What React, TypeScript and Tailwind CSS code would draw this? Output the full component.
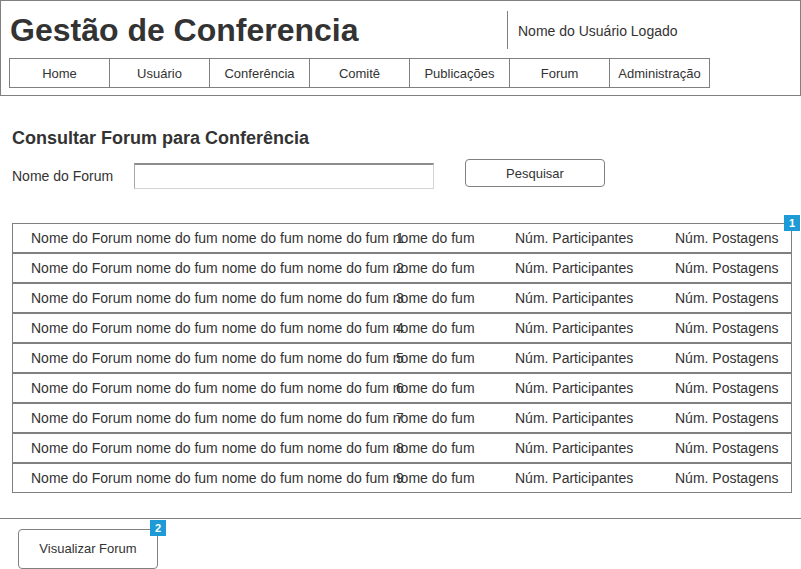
import React from "react";

const navItems = ["Home", "Usuário", "Conferência", "Comitê", "Publicações", "Forum", "Administração"];
const rows = [1, 2, 3, 4, 5, 6, 7, 8, 9];

function Badge({ n }: { n: number }) {
  return (
    <div className="flex h-[16px] w-[16px] items-center justify-center bg-[#1e9ad6] text-[11px] font-bold leading-none text-white">
      {n}
    </div>
  );
}

export default function App() {
  return (
    <div
      className="relative h-[569px] w-[801px] overflow-hidden bg-white text-[#333333]"
      style={{ fontFamily: '"Liberation Sans", Arial, sans-serif' }}
    >
      {/* Header */}
      <div className="h-[96px] border border-[#808080] px-[8px] pt-[10px]">
        <div className="grid h-[38px] grid-cols-[498px_1fr]">
          <div className="pl-[1px] pt-[1px] text-[32px] font-bold leading-[37px] text-[#333333]">Gestão de Conferencia</div>
          <div className="flex items-center border-l border-[#808080] pl-[10px] pt-[2px] text-[14px]">Nome do Usuário Logado</div>
        </div>
        <div className="mt-[9px] flex h-[30px] w-[701px] border-y border-l border-[#808080]">
          {navItems.map((t) => (
            <div key={t} className="flex w-[100px] items-center justify-center border-r border-[#808080] pt-[1px] text-[13px]">
              {t}
            </div>
          ))}
        </div>
      </div>

      {/* Search section */}
      <div className="mt-[30px] pl-[12px] text-[18px] font-bold leading-[24px]">Consultar Forum para Conferência</div>
      <div className="mt-[9px] flex items-start pl-[12px]">
        <div className="mt-[7px] w-[122px] text-[14px] leading-[20px]">Nome do Forum</div>
        <div className="mt-[4px] h-[26px] w-[300px] border border-[#d4d4d4] border-l-[#a8a8a8] border-t-2 border-t-[#8c8c8c] bg-white"></div>
        <button className="ml-[31px] flex h-[28px] w-[140px] items-center justify-center rounded-[4px] border border-[#808080] bg-white pt-[1px] text-[13px] text-[#333333]">
          Pesquisar
        </button>
      </div>

      {/* Table */}
      <div className="relative ml-[12px] mt-[34px] w-[780px] border border-[#808080]">
        {rows.map((n, i) => (
          <div
            key={n}
            className={`relative flex items-center whitespace-nowrap text-[14px] ${i === 0 ? "h-[28px]" : "h-[30px] border-t-2 border-[#808080]"}`}
          >
            <div className="w-[502px] pl-[18px]">Nome do Forum nome do fum nome do fum nome do fum nome do fum</div>
            <div className="w-[160px]">Núm. Participantes</div>
            <div>Núm. Postagens</div>
            <div className="absolute left-[383px] top-0 flex h-full items-center">{n}</div>
          </div>
        ))}
        <div className="absolute right-[-9px] top-[-9px]">
          <Badge n={1} />
        </div>
      </div>

      {/* Footer */}
      <div className="mt-[25px] h-[1px] w-full bg-[#808080]"></div>
      <div className="relative ml-[18px] mt-[10px] w-[140px]">
        <button className="flex h-[40px] w-[140px] items-center justify-center rounded-[4px] border border-[#808080] bg-white text-[13px] text-[#333333]">
          Visualizar Forum
        </button>
        <div className="absolute left-[132px] top-[-9px]">
          <Badge n={2} />
        </div>
      </div>
    </div>
  );
}
